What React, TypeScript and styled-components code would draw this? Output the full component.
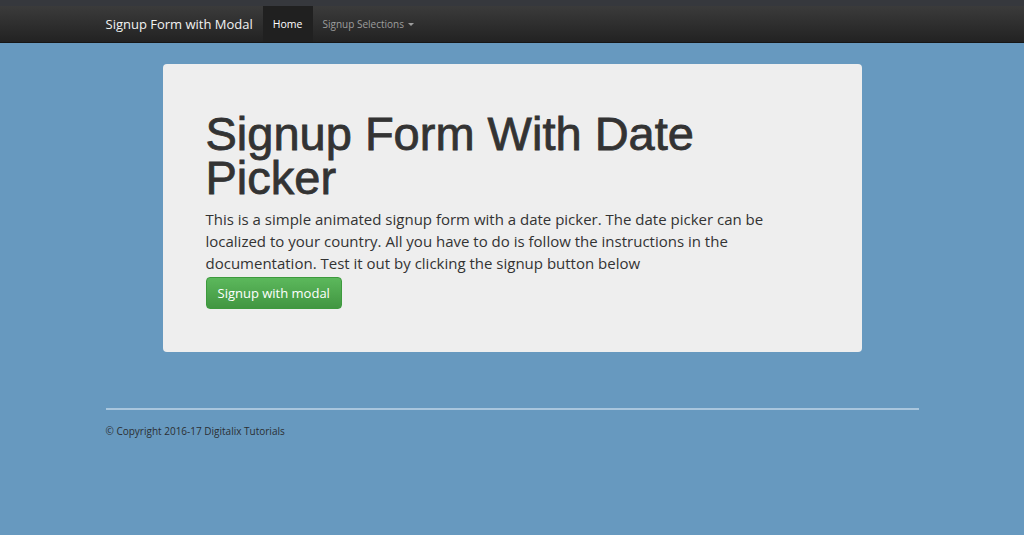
import React from "react";
import styled, { createGlobalStyle } from "styled-components";

const PAGE_WIDTH = "813px";

const GlobalStyle = createGlobalStyle`
  html, body {
    margin: 0;
    padding: 0;
    background: #6799bf;
    font-family: "Open Sans", "Liberation Sans", sans-serif;
    color: #333;
  }
  * {
    box-sizing: border-box;
  }
`;

const TopStrip = styled.div`
  height: 6px;
  background: #36383d;
`;

const Navbar = styled.nav`
  height: 37px;
  background: linear-gradient(to bottom, #3b3b3b 0%, #222 100%);
  border-bottom: 1px solid #161616;
`;

const NavInner = styled.div`
  width: ${PAGE_WIDTH};
  height: 100%;
  margin: 0 auto;
  display: flex;
  align-items: stretch;
`;

const Brand = styled.a`
  display: flex;
  align-items: center;
  font-size: 13px;
  color: #f2f2f2;
  padding-right: 10px;
  padding-bottom: 1px;
`;

const NavItem = styled.a<{ $active?: boolean }>`
  display: flex;
  align-items: center;
  gap: 4px;
  padding: 0 10px 1px;
  font-size: ${(p) => (p.$active ? "10.5px" : "10px")};
  color: ${(p) => (p.$active ? "#fff" : "#9d9d9d")};
  background: ${(p) => (p.$active ? "#202020" : "transparent")};
  font-weight: ${(p) => (p.$active ? 500 : 400)};
`;

const Caret = styled.span`
  width: 0;
  height: 0;
  border-left: 3px solid transparent;
  border-right: 3px solid transparent;
  border-top: 3px solid #9d9d9d;
  margin-top: 1px;
`;

const Card = styled.section`
  width: 699px;
  margin: 21px auto 0;
  height: 288px;
  background: #eee;
  border-radius: 4px;
  padding: 48px 43px 0;
`;

const Title = styled.h1`
  margin: 0;
  font-family: "Liberation Sans", Arial, sans-serif;
  font-weight: 400;
  font-size: 47px;
  line-height: 44px;
  color: #333;
  -webkit-text-stroke: 0.8px #333;
`;

const Lead = styled.p`
  margin: 8px 0 0;
  font-size: 15px;
  line-height: 22px;
  color: #333;
  width: 580px;
`;

const Button = styled.button`
  margin-top: 3px;
  height: 32px;
  padding: 0 11px;
  border: 1px solid #3d9a3d;
  border-radius: 4px;
  background: linear-gradient(to bottom, #5cb85c 0%, #419641 100%);
  color: #fff;
  font-family: "Open Sans", "Liberation Sans", sans-serif;
  font-size: 13px;
`;

const Footer = styled.footer`
  width: ${PAGE_WIDTH};
  margin: 56px auto 0;
  border-top: 2px solid #a9c6dd;
  padding-top: 14px;
  font-size: 10px;
  color: #2b2f33;
`;

export default function App() {
  return (
    <>
      <GlobalStyle />
      <TopStrip />
      <Navbar>
        <NavInner>
          <Brand>Signup Form with Modal</Brand>
          <NavItem $active>Home</NavItem>
          <NavItem>
            Signup Selections <Caret />
          </NavItem>
        </NavInner>
      </Navbar>
      <Card>
        <Title>Signup Form With Date Picker</Title>
        <Lead>
          This is a simple animated signup form with a date picker. The date
          picker can be localized to your country. All you have to do is follow
          the instructions in the documentation. Test it out by clicking the
          signup button below
        </Lead>
        <Button>Signup with modal</Button>
      </Card>
      <Footer>© Copyright 2016-17 Digitalix Tutorials</Footer>
    </>
  );
}
